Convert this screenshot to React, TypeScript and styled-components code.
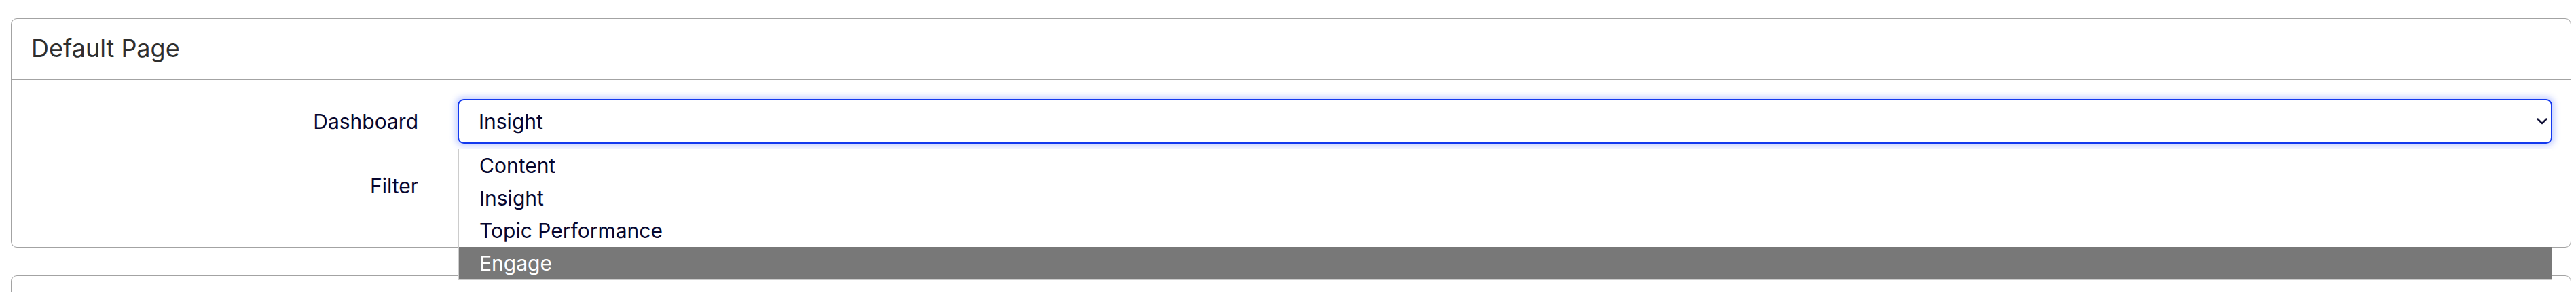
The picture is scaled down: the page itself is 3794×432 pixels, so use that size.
import styled, { createGlobalStyle } from "styled-components";

const GlobalStyle = createGlobalStyle`
  html, body {
    margin: 0;
    padding: 0;
    background: #ffffff;
  }
  body {
    font-family: Inter, "Noto Sans", "Liberation Sans", sans-serif;
    color: #06062e;
  }
`;

const dashboards = ["Content", "Insight", "Topic Performance", "Engage"];

const ChevronDown = () => (
  <svg width="16" height="10" viewBox="0 0 16 10" fill="none">
    <path d="M1.5 1.5L8 8L14.5 1.5" stroke="#15153a" strokeWidth="2.5" strokeLinecap="round" strokeLinejoin="round" />
  </svg>
);

const App = () => {
  const selected = "Insight";
  const hovered = "Engage";

  return (
    <Page>
      <GlobalStyle />
      <Card>
        <CardHeader>
          <Title>Default Page</Title>
        </CardHeader>
        <CardBody>
          <FormRow>
            <Label>Dashboard</Label>
            <Field>
              <SelectBox $focused>
                <span>{selected}</span>
                <ChevronDown />
              </SelectBox>
              <Menu>
                {dashboards.map((item) => (
                  <Option key={item} $active={item === hovered}>
                    {item}
                  </Option>
                ))}
              </Menu>
            </Field>
          </FormRow>
          <FormRow>
            <Label>Filter</Label>
            <Field>
              <SelectBox>
                <span />
                <ChevronDown />
              </SelectBox>
            </Field>
          </FormRow>
        </CardBody>
      </Card>
      <NextCard />
    </Page>
  );
};

export default App;

const Page = styled.div`
  padding: 27px 7px 0 16px;
  display: flex;
  flex-direction: column;
  gap: 41px;
`;

const Card = styled.section`
  border: 1px solid #a3a3a3;
  border-radius: 9px;
  background: #ffffff;
`;

const NextCard = styled(Card)`
  height: 23px;
  border-bottom: none;
  border-radius: 9px 9px 0 0;
`;

const CardHeader = styled.div`
  height: 90px;
  display: flex;
  align-items: center;
  padding: 0 28px 3px 29px;
  box-sizing: border-box;
  border-bottom: 1px solid #a3a3a3;
`;

const Title = styled.h2`
  margin: 0;
  font-size: 36px;
  font-weight: 400;
  color: #2e2e2e;
`;

const CardBody = styled.div`
  padding: 28px 27px 57px 28px;
  display: flex;
  flex-direction: column;
  gap: 29px;
`;

const FormRow = styled.div`
  display: grid;
  grid-template-columns: 571px 1fr;
  column-gap: 58px;
  align-items: center;
`;

const Label = styled.label`
  text-align: right;
  font-size: 30px;
  font-weight: 400;
  color: #06062e;
`;

const Field = styled.div`
  position: relative;
`;

const SelectBox = styled.div<{ $focused?: boolean }>`
  height: 66px;
  box-sizing: border-box;
  display: flex;
  align-items: center;
  justify-content: space-between;
  padding: 0 5px 0 29px;
  font-size: 30px;
  color: #06062e;
  background: #ffffff;
  border-radius: 9px;
  border: ${({ $focused }) => ($focused ? "2px solid #1238ee" : "1px solid #a8a8a8")};
  box-shadow: ${({ $focused }) => ($focused ? "0 0 9px 4px rgba(70, 100, 255, 0.28)" : "none")};
`;

const Menu = styled.ul`
  position: absolute;
  top: calc(100% + 7px);
  left: 1px;
  right: 0;
  margin: 0;
  padding: 0;
  list-style: none;
  background: #ffffff;
  border: 1px solid #cccccc;
  z-index: 10;
`;

const Option = styled.li<{ $active?: boolean }>`
  height: 48px;
  display: flex;
  align-items: center;
  padding: 0 30px;
  font-size: 30px;
  color: ${({ $active }) => ($active ? "#ffffff" : "#06062e")};
  background: ${({ $active }) => ($active ? "#787878" : "transparent")};
`;
